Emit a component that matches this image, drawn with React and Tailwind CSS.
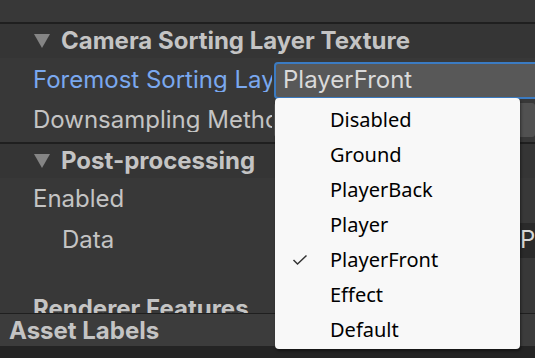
import React from 'react';

const Tri = () => (
  <svg width="18" height="16" viewBox="0 0 18 16" className="shrink-0">
    <polygon points="1,1 17,1 9,15" fill="#858585" />
  </svg>
);

const Header = ({ title }) => (
  <div className="h-[34px] bg-[#353535] flex items-center pl-[33px] gap-[10px] shrink-0">
    <Tri />
    <span className="text-[24px] font-bold text-[#c4c4c4] leading-none">{title}</span>
  </div>
);

const options = ['Disabled', 'Ground', 'PlayerBack', 'Player', 'PlayerFront', 'Effect', 'Default'];

export default function App() {
  return (
    <div
      className="w-[535px] h-[358px] relative overflow-hidden bg-[#383838] flex flex-col"
      style={{ fontFamily: 'Inter, "Noto Sans", sans-serif' }}
    >
      <div className="h-[22px] shrink-0 bg-[#383838]" />
      <div className="h-[2px] shrink-0 bg-[#1f1f1f]" />
      <Header title="Camera Sorting Layer Texture" />

      {/* Foremost Sorting Layer */}
      <div className="flex items-center h-[42px] shrink-0 pt-[2px]">
        <span className="w-[272px] shrink-0 pl-[33px] text-[24px] leading-none text-[#7aa8ef] whitespace-nowrap overflow-hidden">
          Foremost Sorting Layer
        </span>
        <div className="ml-[2px] flex-1 -mr-[6px] h-[37px] flex items-center pl-[7px] text-[24px] leading-none text-[#dadada] rounded-[4px] bg-[#585858] border-2 border-[#3b7bc2]">
          PlayerFront
        </div>
      </div>

      {/* Downsampling Method */}
      <div className="flex items-center h-[40px] shrink-0">
        <span className="w-[272px] shrink-0 pl-[33px] text-[24px] leading-none text-[#c4c4c4] whitespace-nowrap overflow-hidden">
          Downsampling Method
        </span>
        <div className="ml-[2px] flex-1 h-[34px] flex items-center pl-[8px] text-[24px] leading-none text-[#dadada] rounded-[3px] bg-[#515151]">
          None
        </div>
      </div>

      <div className="h-[2px] shrink-0" />
      <div className="h-[2px] shrink-0 bg-[#1f1f1f]" />
      <Header title="Post-processing" />

      <div className="flex items-center h-[42px] shrink-0">
        <span className="pl-[33px] text-[24px] leading-none text-[#c4c4c4]">Enabled</span>
      </div>

      <div className="flex items-center h-[40px] shrink-0">
        <span className="w-[274px] shrink-0 pl-[62px] text-[24px] leading-none text-[#c4c4c4]">Data</span>
        <div className="flex-1 pl-[244px]">
          <div className="h-[35px] bg-[#2a2a2a] flex items-center pl-[2px] text-[24px] leading-none text-[#d8d8d8] overflow-hidden whitespace-nowrap">
            Po
          </div>
        </div>
      </div>

      <div className="h-[53px] shrink-0 overflow-hidden relative">
        <span className="absolute left-[33px] top-[37px] text-[24px] font-bold text-[#c4c4c4] leading-none whitespace-nowrap">
          Renderer Features
        </span>
      </div>

      <div className="h-[1px] shrink-0 bg-[#1f1f1f]" />
      <div className="h-[32px] shrink-0 bg-[#3c3c3c] flex items-center pl-[9px] pt-[2px]">
        <span className="text-[24px] font-bold leading-none text-[#c4c4c4]">Asset Labels</span>
      </div>
      <div className="flex-1 bg-[#242424]" />

      <div
        className="absolute left-[275px] top-[98px] w-[245px] h-[251px] bg-[#f8f8f8] rounded-[4px] shadow-[1px_2px_3px_rgba(0,0,0,0.45)] pt-[4px]"
        style={{ fontFamily: '"Noto Sans", "Open Sans", sans-serif' }}
      >
        {options.map((o) => (
          <div key={o} className="h-[35px] flex items-center relative text-[20px] leading-none text-black">
            {o === 'PlayerFront' && (
              <svg width="16" height="12" viewBox="0 0 16 12" className="absolute left-[17px] top-[12px]">
                <polyline points="1.5,6 5.5,10 14.5,1.5" fill="none" stroke="#333" strokeWidth="1.5" />
              </svg>
            )}
            <span className="pl-[55px]">{o}</span>
          </div>
        ))}
      </div>
    </div>
  );
}
